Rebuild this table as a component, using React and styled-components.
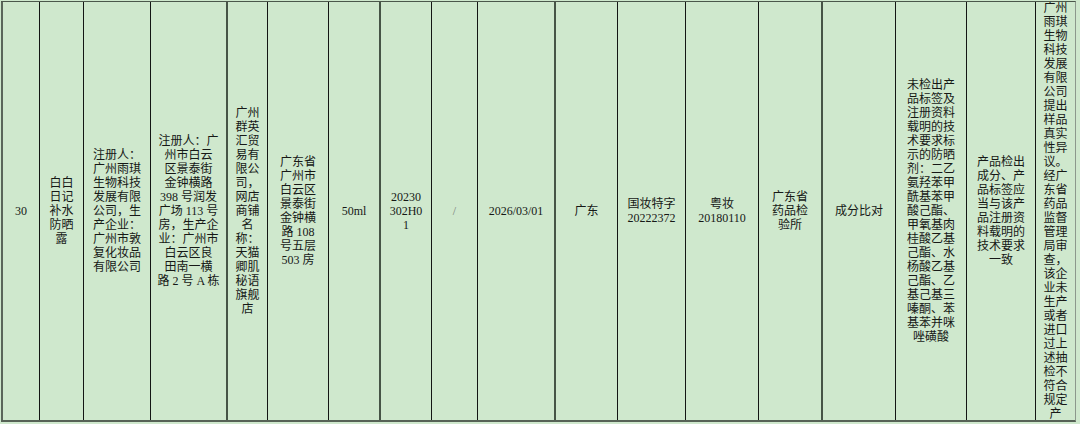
import React from 'react';
import styled, { createGlobalStyle } from 'styled-components';

const GlobalStyle = createGlobalStyle`
  html, body {
    margin: 0;
    padding: 0;
    background: #cfe8cd;
  }
  body {
    padding: 1px 0 0 1px;
    font-family: "Liberation Serif", "Noto Sans CJK SC", serif;
    font-size: 12px;
    color: #161816;
  }
`;

const Row = styled.div`
  display: flex;
  width: max-content;
  height: 418px;
  border-top: 1px solid #4b574b;
  border-bottom: 2px solid #566256;
  border-right: 1px solid #8c988c;
`;

const Cell = styled.div`
  box-sizing: border-box;
  flex: none;
  width: ${({ $w }) => $w}px;
  height: 100%;
  display: flex;
  flex-direction: column;
  justify-content: ${({ $top }) => ($top ? 'flex-start' : 'center')};
  align-items: center;
  overflow: hidden;
  border-left: ${({ $edge }) =>
    $edge === 'outer'
      ? '2px solid #5a665a'
      : $edge === 'soft'
      ? '2px solid #465446'
      : '1px solid #141614'};
  padding-top: ${({ $top }) => ($top ? '0' : '0')};
`;

const Text = styled.div`
  display: flex;
  flex-direction: column;
  align-items: ${({ $left }) => ($left ? 'flex-start' : 'center')};
  line-height: 14px;
  white-space: nowrap;
  color: ${({ $muted }) => ($muted ? '#7a807a' : 'inherit')};
  margin-top: ${({ $top }) => ($top ? '-1px' : '0')};
`;

const Line = styled.span`
  display: block;
`;

const columns = [
  { w: 38, edge: 'outer', lines: ['30'] },
  { w: 44, lines: ['白白', '日记', '补水', '防晒', '露'] },
  {
    w: 67,
    left: true,
    lines: ['注册人：', '广州雨琪', '生物科技', '发展有限', '公司，生', '产企业：', '广州市敦', '复化妆品', '有限公司'],
  },
  {
    w: 76,
    lines: [
      '注册人：广',
      '州市白云',
      '区景泰街',
      '金钟横路',
      '398 号润发',
      '广场 113 号',
      '房，生产企',
      '业：广州市',
      '白云区良',
      '田南一横',
      '路 2 号 A 栋',
    ],
  },
  {
    w: 41,
    edge: 'soft',
    lines: ['广州', '群英', '汇贸', '易有', '限公', '司，', '网店', '商铺', '名', '称：', '天猫', '卿肌', '秘语', '旗舰', '店'],
  },
  { w: 61, lines: ['广东省', '广州市', '白云区', '景泰街', '金钟横', '路 108', '号五层', '503 房'] },
  { w: 51, lines: ['50ml'] },
  { w: 52, edge: 'soft', lines: ['20230', '302H0', '1'] },
  { w: 46, muted: true, lines: ['/'] },
  { w: 77, lines: ['2026/03/01'] },
  { w: 63, edge: 'soft', lines: ['广东'] },
  { w: 68, lines: ['国妆特字', '20222372'] },
  { w: 73, lines: ['粤妆', '20180110'] },
  { w: 63, lines: ['广东省', '药品检', '验所'] },
  { w: 74, edge: 'soft', lines: ['成分比对'] },
  {
    w: 71,
    lines: [
      '未检出产',
      '品标签及',
      '注册资料',
      '载明的技',
      '术要求标',
      '示的防晒',
      '剂：二乙',
      '氨羟苯甲',
      '酰基苯甲',
      '酸己酯、',
      '甲氧基肉',
      '桂酸乙基',
      '己酯、水',
      '杨酸乙基',
      '己酯、乙',
      '基己基三',
      '嗪酮、苯',
      '基苯并咪',
      '唑磺酸',
    ],
  },
  { w: 69, lines: ['产品检出', '成分、产', '品标签应', '当与该产', '品注册资', '料载明的', '技术要求', '一致'] },
  {
    w: 40,
    top: true,
    lines: [
      '广州', '雨琪', '生物', '科技', '发展', '有限', '公司', '提出', '样品', '真实',
      '性异', '议。', '经广', '东省', '药品', '监督', '管理', '局审', '查，', '该企',
      '业未', '生产', '或者', '进口', '过上', '述抽', '检不', '符合', '规定', '产',
    ],
  },
];

export default function App() {
  return (
    <>
      <GlobalStyle />
      <Row>
        {columns.map((col, i) => (
          <Cell key={i} $w={col.w} $edge={col.edge} $top={col.top}>
            <Text $left={col.left} $muted={col.muted} $top={col.top}>
              {col.lines.map((line, j) => (
                <Line key={j}>{line}</Line>
              ))}
            </Text>
          </Cell>
        ))}
      </Row>
    </>
  );
}
